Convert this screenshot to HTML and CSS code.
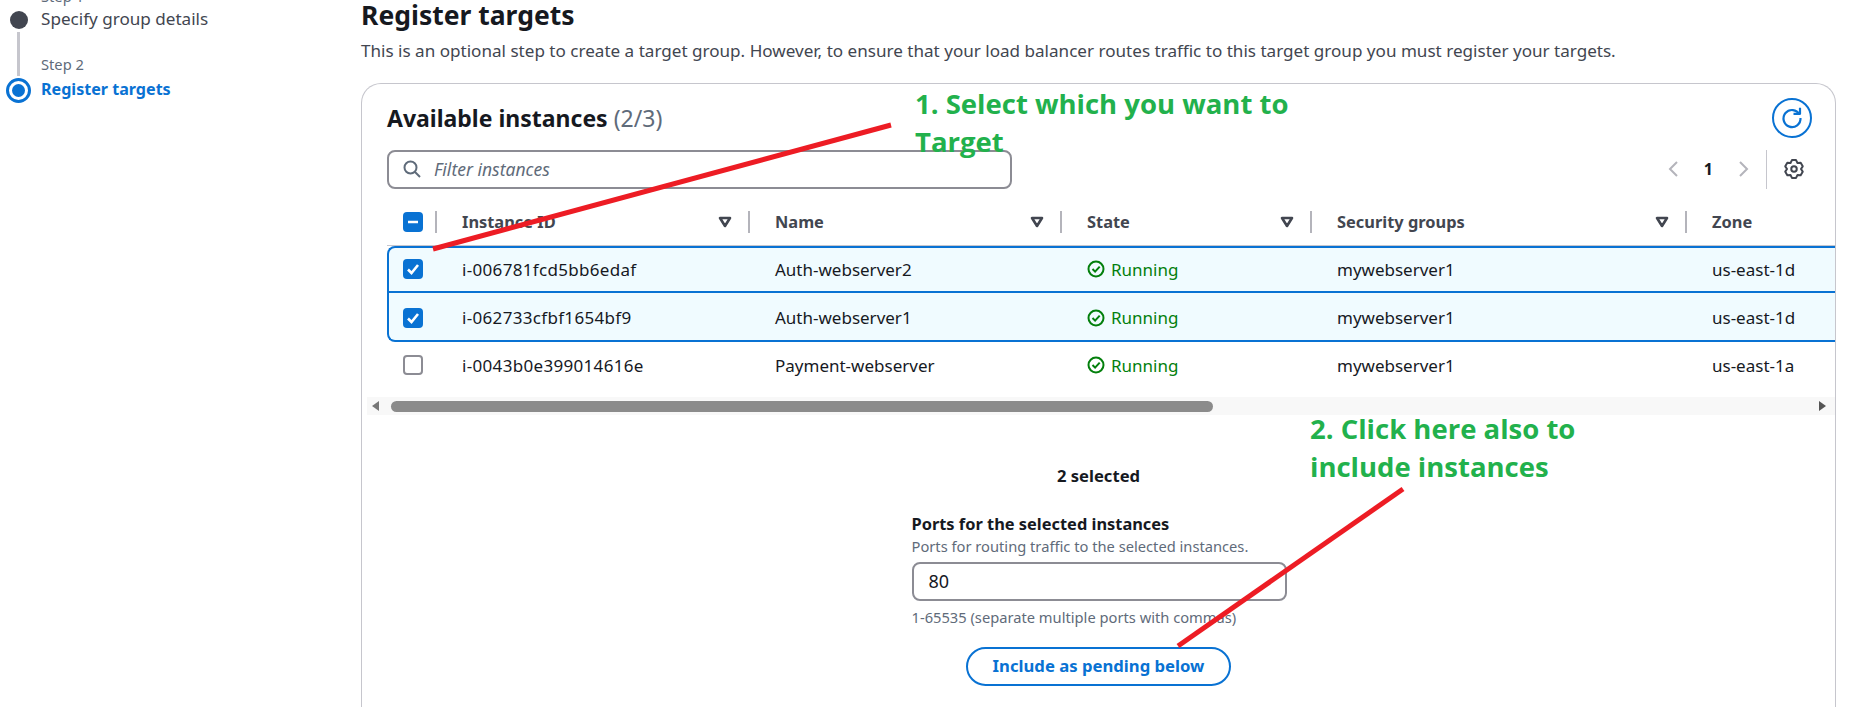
FILE: index.html
```html
<!DOCTYPE html>
<html lang="en">
<head>
    <meta charset="UTF-8">
    <title>Register targets</title>
    <link rel="stylesheet" href="styles.css">
</head>
<body>
    <div class="page">
        <nav class="sidebar">
            <div class="step-track">
                <span class="dot"></span>
                <span class="track-line"></span>
                <span class="ring"><span class="ring-core"></span></span>
            </div>
            <div class="step-text">
                <div class="step-label">Step 1</div>
                <div class="step-name">Specify group details</div>
                <div class="step-label step-label-next">Step 2</div>
                <div class="step-name step-name-active">Register targets</div>
            </div>
        </nav>

        <main class="content">
            <h1 class="page-title">Register targets</h1>
            <p class="page-desc">This is an optional step to create a target group. However, to ensure that your load balancer routes traffic to this target group you must register your targets.</p>

            <section class="panel">
                <div class="panel-head">
                    <h2 class="panel-title">Available instances <span class="count">(2/3)</span></h2>
                    <button type="button" class="refresh">
                        <svg width="24" height="24" viewBox="0 0 24 24" fill="none" stroke="#0972d3" stroke-width="2.2">
                            <path d="M19.5 8.5A8.5 8.5 0 1 0 20.5 12"/>
                            <path d="M13.5 7.8H20V1.8" stroke-linejoin="round"/>
                        </svg>
                    </button>
                </div>

                <div class="tools">
                    <div class="filter">
                        <svg width="18" height="18" viewBox="0 0 18 18" fill="none" stroke="#5f6b7a" stroke-width="2">
                            <circle cx="7.5" cy="7.5" r="6"/>
                            <path d="M12 12l5 5"/>
                        </svg>
                        <span class="filter-text">Filter instances</span>
                    </div>
                    <div class="pager">
                        <svg width="12" height="18" viewBox="0 0 12 18" fill="none" stroke="#b4b4bb" stroke-width="2"><path d="M10 2L3 9l7 7"/></svg>
                        <span class="page-num">1</span>
                        <svg width="12" height="18" viewBox="0 0 12 18" fill="none" stroke="#b4b4bb" stroke-width="2"><path d="M2 2l7 7-7 7"/></svg>
                    </div>
                    <div class="gear-box">
                        <svg width="20" height="20" viewBox="0 0 16 16" fill="none" stroke="#424650" stroke-width="1.6" stroke-linejoin="round">
                            <polygon points="6.36,.89 9.64,.89 10.8,3.15 13.34,3.02 14.98,5.87 13.6,8 14.98,10.13 13.34,12.98 10.8,12.85 9.64,15.11 6.36,15.11 5.2,12.85 2.66,12.98 1.02,10.13 2.4,8 1.02,5.87 2.66,3.02 5.2,3.15"/>
                            <circle cx="8" cy="8" r="2.2"/>
                        </svg>
                    </div>
                </div>

                <div class="table">
                    <div class="row row-head">
                        <div class="cell cell-check">
                            <span class="check check-on"><svg width="20" height="20" viewBox="0 0 20 20"><path d="M5 10h10" stroke="#fff" stroke-width="2.6"/></svg></span>
                            <span class="divider"></span>
                        </div>
                        <div class="cell cell-head">Instance ID
                            <svg class="sort" width="14" height="12" viewBox="0 0 14 12" fill="none" stroke="#424650" stroke-width="2.6" stroke-linejoin="round"><path d="M2 2h10L7 10z"/></svg>
                            <span class="divider"></span>
                        </div>
                        <div class="cell cell-head">Name
                            <svg class="sort" width="14" height="12" viewBox="0 0 14 12" fill="none" stroke="#424650" stroke-width="2.6" stroke-linejoin="round"><path d="M2 2h10L7 10z"/></svg>
                            <span class="divider"></span>
                        </div>
                        <div class="cell cell-head">State
                            <svg class="sort" width="14" height="12" viewBox="0 0 14 12" fill="none" stroke="#424650" stroke-width="2.6" stroke-linejoin="round"><path d="M2 2h10L7 10z"/></svg>
                            <span class="divider"></span>
                        </div>
                        <div class="cell cell-head">Security groups
                            <svg class="sort" width="14" height="12" viewBox="0 0 14 12" fill="none" stroke="#424650" stroke-width="2.6" stroke-linejoin="round"><path d="M2 2h10L7 10z"/></svg>
                            <span class="divider"></span>
                        </div>
                        <div class="cell cell-head">Zone</div>
                    </div>

                    <div class="row row-selected row-first">
                        <div class="cell cell-check"><span class="check check-on"><svg width="20" height="20" viewBox="0 0 20 20" fill="none"><path d="M5 10.5l3.5 3.5 6.5-8" stroke="#fff" stroke-width="2.6"/></svg></span></div>
                        <div class="cell cell-id">i-006781fcd5bb6edaf</div>
                        <div class="cell">Auth-webserver2</div>
                        <div class="cell state"><svg width="18" height="18" viewBox="0 0 18 18" fill="none" stroke="#037f0c" stroke-width="2"><circle cx="9" cy="9" r="7.5"/><path d="M5.5 9l2.6 2.6 4.6-5"/></svg>Running</div>
                        <div class="cell">mywebserver1</div>
                        <div class="cell">us-east-1d</div>
                    </div>
                    <div class="row row-selected row-last">
                        <div class="cell cell-check"><span class="check check-on"><svg width="20" height="20" viewBox="0 0 20 20" fill="none"><path d="M5 10.5l3.5 3.5 6.5-8" stroke="#fff" stroke-width="2.6"/></svg></span></div>
                        <div class="cell cell-id">i-062733cfbf1654bf9</div>
                        <div class="cell">Auth-webserver1</div>
                        <div class="cell state"><svg width="18" height="18" viewBox="0 0 18 18" fill="none" stroke="#037f0c" stroke-width="2"><circle cx="9" cy="9" r="7.5"/><path d="M5.5 9l2.6 2.6 4.6-5"/></svg>Running</div>
                        <div class="cell">mywebserver1</div>
                        <div class="cell">us-east-1d</div>
                    </div>
                    <div class="row row-plain">
                        <div class="cell cell-check"><span class="check"></span></div>
                        <div class="cell cell-id">i-0043b0e399014616e</div>
                        <div class="cell">Payment-webserver</div>
                        <div class="cell state"><svg width="18" height="18" viewBox="0 0 18 18" fill="none" stroke="#037f0c" stroke-width="2"><circle cx="9" cy="9" r="7.5"/><path d="M5.5 9l2.6 2.6 4.6-5"/></svg>Running</div>
                        <div class="cell">mywebserver1</div>
                        <div class="cell">us-east-1a</div>
                    </div>
                </div>

                <div class="scrollbar">
                    <span class="arrow arrow-left"></span>
                    <div class="scroll-area"><span class="thumb"></span></div>
                    <span class="arrow arrow-right"></span>
                </div>

                <div class="selected-box">
                    <div class="selected-count">2 selected</div>
                    <div class="ports">
                        <div class="ports-label">Ports for the selected instances</div>
                        <div class="ports-desc">Ports for routing traffic to the selected instances.</div>
                        <div class="ports-input">80</div>
                        <div class="ports-desc ports-hint">1-65535 (separate multiple ports with commas)</div>
                    </div>
                    <button type="button" class="pending-btn">Include as pending below</button>
                </div>
            </section>
        </main>
    </div>

    <!-- annotations drawn on top of the screenshot -->
    <svg class="marks" width="1852" height="707" viewBox="0 0 1852 707">
        <path d="M891 125L433 249" stroke="#ed1c24" stroke-width="5"/>
        <path d="M1403 489L1178 646" stroke="#ed1c24" stroke-width="5"/>
    </svg>
    <div class="note note-one">1. Select which you want to<br>Target</div>
    <div class="note note-two">2. Click here also to<br>include instances</div>
</body>
</html>
```

FILE: styles.css
```css
* {
    box-sizing: border-box;
}

html,
body {
    margin: 0;
    padding: 0;
    height: 707px;
    overflow: hidden;
    background-color: #fff;
}

body {
    font-family: "Noto Sans", Arial, sans-serif;
    font-size: 17px;
    color: #16191f;
}

.page {
    display: flex;
    width: 1852px;
}

/* left steps */
.sidebar {
    width: 361px;
    flex-shrink: 0;
    display: flex;
    gap: 10px;
    padding-left: 6px;
}

.step-track {
    width: 25px;
    display: flex;
    flex-direction: column;
    align-items: center;
    padding-top: 11px;
}

.dot {
    width: 18px;
    height: 18px;
    border-radius: 50%;
    background-color: #424650;
}

.track-line {
    width: 3px;
    height: 44px;
    margin: 3px 0 2px;
    background-color: #c6c6cd;
}

.ring {
    width: 25px;
    height: 25px;
    border: 3px solid #0972d3;
    border-radius: 50%;
    display: flex;
    align-items: center;
    justify-content: center;
}

.ring-core {
    width: 13px;
    height: 13px;
    border-radius: 50%;
    background-color: #0972d3;
}

.step-text {
    margin-top: -14px;
}

.step-label {
    font-size: 14.7px;
    line-height: 20px;
    color: #5f6b7a;
}

.step-label-next {
    margin-top: 23px;
}

.step-name {
    font-size: 17.1px;
    line-height: 24px;
    margin-top: 1px;
    color: #424650;
}

.step-name-active {
    margin-top: 3px;
    font-size: 16.1px;
    font-weight: 700;
    color: #0972d3;
}

/* main column */
.content {
    width: 1475px;
}

.page-title {
    margin: 0;
    font-size: 26.5px;
    line-height: 30px;
    font-weight: 700;
    color: #16191f;
}

.page-desc {
    margin: 10px 0 0 0;
    font-size: 17.08px;
    line-height: 22px;
    color: #424650;
    white-space: nowrap;
}

.panel {
    margin-top: 21px;
    border: 1px solid #c6c6cd;
    border-bottom: 0;
    border-radius: 20px 20px 0 0;
    height: 640px;
    overflow: hidden;
}

.panel-head {
    display: flex;
    justify-content: space-between;
    align-items: center;
    padding: 3px 23px 0 25px;
    height: 65px;
}

.panel-title {
    margin: 0;
    font-size: 23px;
    line-height: 28px;
    font-weight: 700;
}

.count {
    font-weight: 400;
    color: #5f6b7a;
}

.refresh {
    width: 40px;
    height: 40px;
    border: 2px solid #0972d3;
    border-radius: 50%;
    background: #fff;
    padding: 0;
    display: flex;
    align-items: center;
    justify-content: center;
}

.tools {
    display: flex;
    align-items: center;
    padding-left: 25px;
    height: 40px;
}

.filter {
    width: 625px;
    height: 39px;
    border: 2px solid #8c8c94;
    border-radius: 8px;
    display: flex;
    align-items: center;
    gap: 13px;
    padding-left: 14px;
}

.filter-text {
    font-size: 17.5px;
    font-style: italic;
    color: #5f6b7a;
}

.pager {
    margin-left: auto;
    display: flex;
    align-items: center;
    gap: 25px;
    padding-right: 16px;
}

.page-num {
    font-size: 16px;
    font-weight: 700;
}

.gear-box {
    width: 69px;
    height: 39px;
    border-left: 1px solid #c6c6cd;
    padding-left: 17px;
    display: flex;
    align-items: center;
}

/* table */
.table {
    margin-top: 16px;
    margin-left: 25px;
}

.row {
    display: grid;
    grid-template-columns: 75px 313px 312px 250px 375px 124px;
    align-items: center;
}

.row-head {
    height: 41px;
    border-bottom: 1px solid #c6c6cd;
    padding-bottom: 7px;
    font-size: 16.4px;
    font-weight: 700;
    color: #424650;
}

.row-selected {
    background-color: #f0fbff;
    border: 2px solid #0972d3;
    border-right: 0;
}

.row-first {
    height: 47px;
    padding-bottom: 1px;
    border-top-left-radius: 8px;
}

.row-last {
    height: 49px;
    padding-top: 2px;
    border-top: 0;
    border-bottom-left-radius: 8px;
}

.row-plain {
    height: 48px;
    padding-bottom: 2px;
}

.cell {
    display: flex;
    align-items: center;
    height: 24px;
    white-space: nowrap;
}

.row-selected .cell {
    margin-left: -2px;
}

.row-selected .cell-check {
    margin-left: 0;
    padding-left: 14px;
}

.cell-check {
    padding-left: 16px;
}

.cell-id {
    letter-spacing: 0.32px;
}

.cell-head {
    padding-right: 25px;
}

.sort {
    margin-left: auto;
}

.divider {
    width: 2px;
    height: 22px;
    background-color: #b4b4bb;
    flex-shrink: 0;
}

.cell-head .divider {
    margin-left: 16px;
}

.cell-check .divider {
    margin-left: 12px;
}

.check {
    width: 20px;
    height: 20px;
    border: 2px solid #8c8c94;
    border-radius: 4px;
    background-color: #fff;
    display: block;
    flex-shrink: 0;
}

.check svg {
    display: block;
}

.check-on {
    border: 0;
    background-color: #0972d3;
}

.state {
    gap: 6px;
    color: #037f0c;
}

/* fake horizontal scrollbar */
.scrollbar {
    display: flex;
    align-items: center;
    height: 18px;
    margin-top: 7px;
    margin-left: 5px;
    background-color: #f8f8f8;
}

.arrow {
    width: 0;
    height: 0;
    border-top: 5px solid transparent;
    border-bottom: 5px solid transparent;
    flex-shrink: 0;
}

.arrow-left {
    margin-left: 5px;
    border-right: 7px solid #777;
}

.arrow-right {
    margin-right: 9px;
    border-left: 7px solid #555;
}

.scroll-area {
    flex: 1;
    padding: 0 3px 0 12px;
}

.thumb {
    display: block;
    width: 822px;
    height: 11px;
    border-radius: 6px;
    background-color: #8b8b8b;
}

/* selection summary */
.selected-box {
    display: flex;
    flex-direction: column;
    align-items: center;
    margin-top: 49px;
}

.selected-count {
    font-size: 16.6px;
    font-weight: 700;
    line-height: 24px;
}

.ports {
    width: 375px;
    margin-top: 24px;
    margin-left: 1px;
}

.ports-label {
    font-weight: 700;
    line-height: 24px;
    font-size: 16.4px;
}

.ports-desc {
    font-size: 14.7px;
    line-height: 20px;
    color: #5f6b7a;
    white-space: nowrap;
}

.ports-input {
    height: 39px;
    margin-top: 6px;
    border: 2px solid #8c8c94;
    border-radius: 8px;
    padding-left: 15px;
    line-height: 35px;
    font-size: 18px;
}

.ports-hint {
    margin-top: 6px;
}

.pending-btn {
    width: 265px;
    height: 39px;
    margin-top: 20px;
    padding: 0 0 2px;
    border: 2px solid #0972d3;
    border-radius: 20px;
    background-color: #fff;
    color: #0972d3;
    font-family: inherit;
    font-size: 16.7px;
    font-weight: 700;
}

/* annotations */
.marks {
    position: absolute;
    left: 0;
    top: 0;
}

.note {
    position: absolute;
    font-family: "Open Sans", Arial, sans-serif;
    font-size: 27.5px;
    font-weight: 700;
    line-height: 38px;
    color: #22b14c;
    white-space: nowrap;
}

.note-one {
    left: 915px;
    top: 85px;
}

.note-two {
    left: 1310px;
    top: 410px;
}
```
